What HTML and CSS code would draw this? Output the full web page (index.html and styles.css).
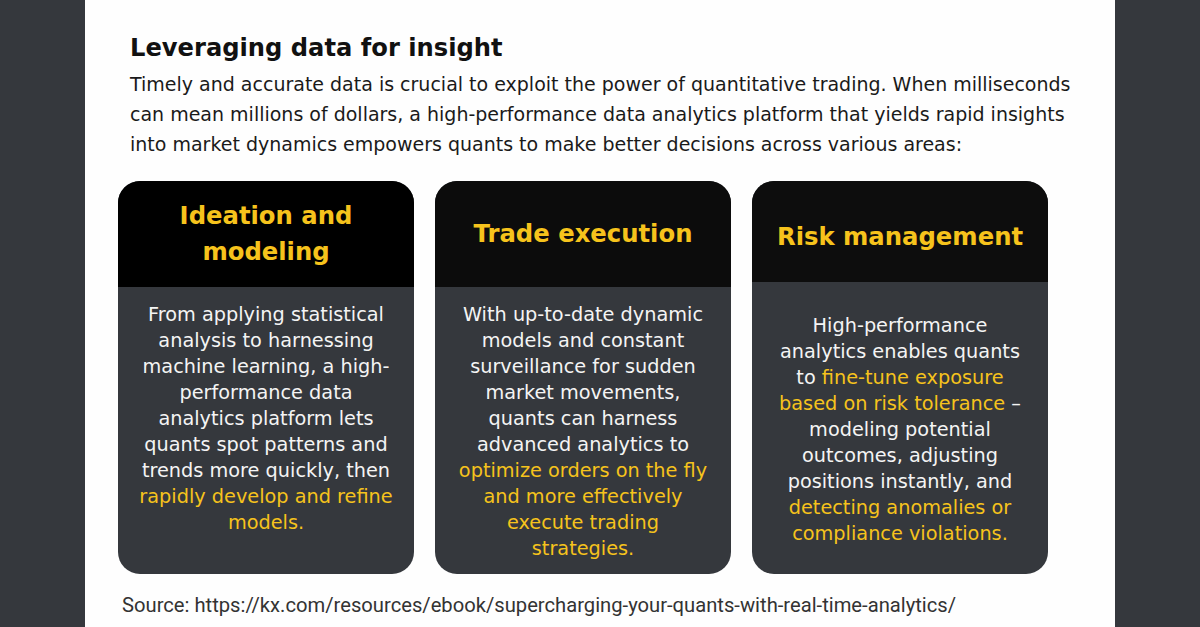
FILE: index.html
```html
<!DOCTYPE html>
<html>
<head>
<meta charset="utf-8">
<link rel="stylesheet" href="styles.css">
</head>
<body>
<div class="page">
  <main class="panel">
    <h1 class="title">Leveraging data for insight</h1>
    <p class="intro">Timely and accurate data is crucial to exploit the power of quantitative trading. When milliseconds<br>can mean millions of dollars, a high-performance data analytics platform that yields rapid insights<br>into market dynamics empowers quants to make better decisions across various areas:</p>
    <section class="cards">
      <article class="card">
        <header class="card-head black"><h2>Ideation and<br>modeling</h2></header>
        <div class="card-body top">
          <p>From applying statistical<br>analysis to harnessing<br>machine learning, a high-<br>performance data<br>analytics platform lets<br>quants spot patterns and<br>trends more quickly, then<br><span class="hl">rapidly develop and refine<br>models.</span></p>
        </div>
      </article>
      <article class="card">
        <header class="card-head"><h2>Trade execution</h2></header>
        <div class="card-body top">
          <p>With up-to-date dynamic<br>models and constant<br>surveillance for sudden<br>market movements,<br>quants can harness<br>advanced analytics to<br><span class="hl">optimize orders on the fly<br>and more effectively<br>execute trading<br>strategies.</span></p>
        </div>
      </article>
      <article class="card">
        <header class="card-head short"><h2>Risk management</h2></header>
        <div class="card-body center">
          <p>High-performance<br>analytics enables quants<br>to <span class="hl">fine-tune exposure<br>based on risk tolerance</span> –<br>modeling potential<br>outcomes, adjusting<br>positions instantly, and<br><span class="hl">detecting anomalies or<br>compliance violations.</span></p>
        </div>
      </article>
    </section>
    <p class="source">Source: https://kx.com/resources/ebook/supercharging-your-quants-with-real-time-analytics/</p>
  </main>
</div>
</body>
</html>
```
FILE: styles.css
```css
html, body {
  margin: 0;
  padding: 0;
  background: #35383d;
}
.page {
  width: 1200px;
  height: 627px;
  display: flex;
  justify-content: center;
  overflow: hidden;
}
.panel {
  width: 1030px;
  height: 627px;
  background: #fefefe;
  box-sizing: border-box;
  padding: 32px 0 0 45px;
  font-family: "DejaVu Sans", "Liberation Sans", sans-serif;
}
.title {
  margin: 0;
  font-size: 24.2px;
  line-height: 32px;
  font-weight: 700;
  color: #111;
}
.intro {
  margin: 5px 0 0;
  font-size: 19px;
  line-height: 30px;
  color: #1a1a1a;
  white-space: nowrap;
}
.cards {
  display: flex;
  gap: 21px;
  margin: 22px 0 0 -12px;
}
.card {
  width: 296px;
  height: 393px;
  border-radius: 22px;
  overflow: hidden;
  background: #35383d;
  display: flex;
  flex-direction: column;
}
.card-head {
  height: 106px;
  background: #0c0c0c;
  display: flex;
  align-items: center;
  justify-content: center;
  flex: none;
  box-sizing: border-box;
}
.card-head.black {
  background: #000;
}
.card-head.short {
  height: 101px;
  padding-top: 10px;
  background: #0d0d0d;
}
.card-head h2 {
  margin: 0;
  text-align: center;
  color: #f6c31c;
  font-size: 24.3px;
  line-height: 36px;
  font-weight: 700;
}
.card-body {
  flex: 1;
  display: flex;
  justify-content: center;
  padding: 0 6px;
}
.card-body.top {
  align-items: flex-start;
  padding-top: 15px;
}
.card-body.center {
  align-items: center;
  padding-top: 4px;
}
.card-body p {
  margin: 0;
  text-align: center;
  color: #f4f4f4;
  font-size: 19.3px;
  line-height: 26px;
  white-space: nowrap;
}
.hl {
  color: #f6c31c;
}
.source {
  margin: 19px 0 0 -8px;
  font-family: "Roboto", "Liberation Sans", sans-serif;
  font-size: 20.2px;
  color: #333;
}
```
